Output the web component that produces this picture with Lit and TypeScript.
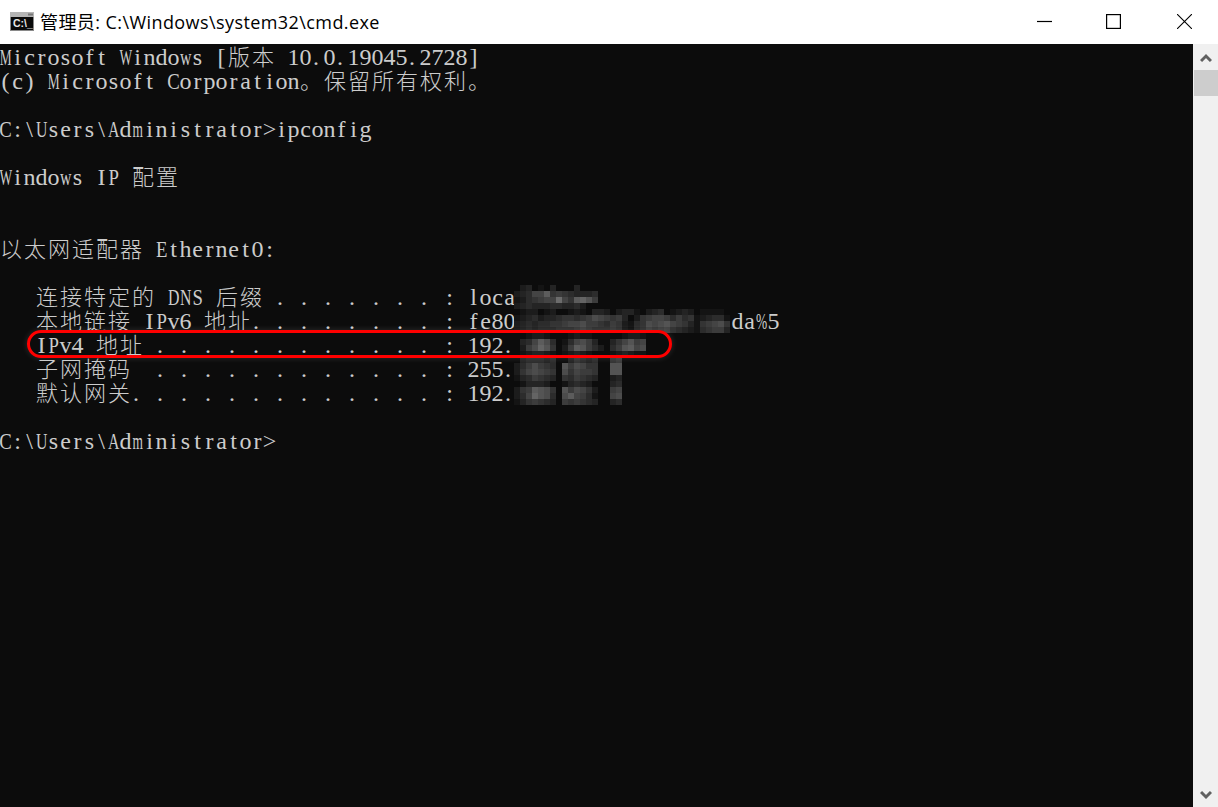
import { LitElement, html, css, svg } from "lit";
import { customElement } from "lit/decorators.js";

const LINES = [
  "Microsoft Windows [版本 10.0.19045.2728]",
  "(c) Microsoft Corporation。保留所有权利。",
  "",
  "C:\\Users\\Administrator>ipconfig",
  "",
  "Windows IP 配置",
  "",
  "",
  "以太网适配器 Ethernet0:",
  "",
  "   连接特定的 DNS 后缀 . . . . . . . : loca",
  "   本地链接 IPv6 地址. . . . . . . . : fe80                  da%5",
  "   IPv4 地址 . . . . . . . . . . . . : 192.",
  "   子网掩码  . . . . . . . . . . . . : 255.",
  "   默认网关. . . . . . . . . . . . . : 192.",
  "",
  "C:\\Users\\Administrator>",
];

const MOSAIC = [
  "02301030003000",
  "23477a56543334",
  "1245677c75ab96",
  "23433344334200",
  "012201200121033202331023401232011110",
  "123423345545687656302567764645123441",
  "234344556778665465214587897653156785",
  "123233344456544454103465675432145663",
  "0012210001211000001221",
  "0347a84014786300357967",
  "0268b95026a96420469a78",
  "0123321012321000123211",
  "034443400354340056",
  "246865409687550099",
  "257876508576650099",
  "134654305465430023",
  "013332001343200034",
  "256a98509687520067",
  "247b98408a76410078",
  "135654306565430034",
];

function shade(d: string) {
  const v = 12 + parseInt(d, 16) * 8;
  return `rgb(${v},${v},${v})`;
}

function cellClass(ch: string) {
  if (ch === ".") return "c dot";
  if ("mMW%".includes(ch)) return "c w3";
  if ("ADGHKNOQRUVXYBw".includes(ch)) return "c w2";
  if ("CEFLPSTZ".includes(ch)) return "c w1";
  return "c";
}

@customElement("app-root")
export class AppRoot extends LitElement {
  static styles = css`
    :host { display: block; width: 1218px; height: 807px; overflow: hidden; background: #fff; }
    .window { display: flex; flex-direction: column; height: 807px; }
    .titlebar { height: 44px; flex: none; display: flex; align-items: center; background: #fff; padding-left: 10px; }
    .app-icon { width: 24px; height: 19px; flex: none; margin: 0 6px 1px 0; }
    .title { flex: 1; font: 18px "Open Sans", "Noto Sans CJK SC", sans-serif; color: #000; white-space: pre; letter-spacing: 0.42px; padding-bottom: 2px; }
    .btns { display: flex; align-self: flex-start; flex: none; padding: 14px 26px 0 0; }
    .btn { width: 15px; height: 15px; display: block; }
    .min { margin-right: 54px; }
    .max { margin-right: 56px; }
    .main { flex: 1; display: flex; min-height: 0; }
    .console { flex: 1; position: relative; background: #0c0c0c; padding-top: 1px; color: #cccccc; overflow: hidden; }
    .line { height: 24px; line-height: 24px; white-space: pre; font-family: "Liberation Serif", serif; font-size: 24px; }
    .sp { display: inline-block; width: 12px; }
    .c { display: inline-flex; width: 11px; padding-right: 1px; justify-content: center; }
    .dot { justify-content: flex-start; padding: 0 0 0 1px; width: 11px; }
    .w1 { transform: scaleX(.78); }
    .w2 { transform: scaleX(.66); }
    .w3 { transform: scaleX(.56); }
    .cjk { font-family: "Noto Sans CJK SC", sans-serif; font-size: 22px; font-weight: 300; letter-spacing: 2px; line-height: 0; }
    .overlay { position: absolute; left: 0; top: 0; width: 1193px; height: 763px; }
    .ring { position: absolute; left: 27px; top: 286px; width: 639px; height: 22px; border: 3px solid #ff0000; border-radius: 14px; box-shadow: 0 0 6px rgba(255,255,255,.14); }
    .scrollbar { width: 25px; flex: none; background: #f0f0f0; display: flex; flex-direction: column; }
    .arrow { height: 26px; flex: none; display: flex; align-items: center; justify-content: center; box-sizing: border-box; padding-top: 2px; }
    .arrow svg { width: 12px; height: 10px; display: block; }
    .thumb { height: 26px; margin-left: 1px; background: #cdcdcd; flex: none; }
    .track { flex: 1; }
    .arrow.down { height: 25px; padding-top: 0; }
  `;

  private latin(text: string) {
    return [...text].map((ch) =>
      ch === " " ? html`<span class="sp"> </span>` : html`<span class=${cellClass(ch)}>${ch}</span>`
    );
  }

  private renderLine(text: string) {
    const parts = text.split(/([\u3000-\u9fff]+)/);
    return html`<div class="line">${parts.map((p, i) => (i % 2 ? html`<span class="cjk">${p}</span>` : this.latin(p)))}</div>`;
  }

  private mosaic() {
    return MOSAIC.flatMap((row, r) =>
      [...row].map((d, c) =>
        d === "0" ? null : svg`<rect x=${514 + c * 6} y=${241 + r * 6} width="6" height="6" fill=${shade(d)}></rect>`
      )
    );
  }

  render() {
    return html`
      <div class="window">
        <div class="titlebar">
          <svg class="app-icon" viewBox="0 0 24 19">
            <rect x="0" y="0" width="24" height="19" fill="#8a8a8a"></rect>
            <rect x="0" y="0" width="24" height="5" fill="#b5b5b5"></rect>
            <rect x="18" y="1.5" width="5" height="2" fill="#777"></rect>
            <rect x="1" y="5" width="22" height="13" fill="#0a0a0a"></rect>
            <text x="3" y="15" font-family="Liberation Sans" font-weight="700" font-size="10.5" fill="#e8e8e8">C:\\_</text>
          </svg>
          <div class="title">管理员: C:\\Windows\\system32\\cmd.exe</div>
          <div class="btns">
            <svg class="btn min" viewBox="0 0 15 15"><path d="M0 7.5H15" stroke="#000" stroke-width="1.2"></path></svg>
            <svg class="btn max" viewBox="0 0 15 15"><rect x=".6" y=".6" width="13.8" height="13.8" fill="none" stroke="#000" stroke-width="1.2"></rect></svg>
            <svg class="btn" viewBox="0 0 15 15"><path d="M0 0L15 15M15 0L0 15" stroke="#000" stroke-width="1.1"></path></svg>
          </div>
        </div>
        <div class="main">
          <div class="console">
            ${LINES.map((l) => this.renderLine(l))}
            <svg class="overlay" viewBox="0 0 1193 763">${this.mosaic()}</svg>
            <div class="ring"></div>
          </div>
          <div class="scrollbar">
            <div class="arrow"><svg viewBox="0 0 12 10"><path d="M1 8L6 3L11 8" fill="none" stroke="#606060" stroke-width="3"></path></svg></div>
            <div class="thumb"></div>
            <div class="track"></div>
            <div class="arrow down"><svg viewBox="0 0 12 10"><path d="M1 2L6 7L11 2" fill="none" stroke="#606060" stroke-width="3"></path></svg></div>
          </div>
        </div>
      </div>
    `;
  }
}
